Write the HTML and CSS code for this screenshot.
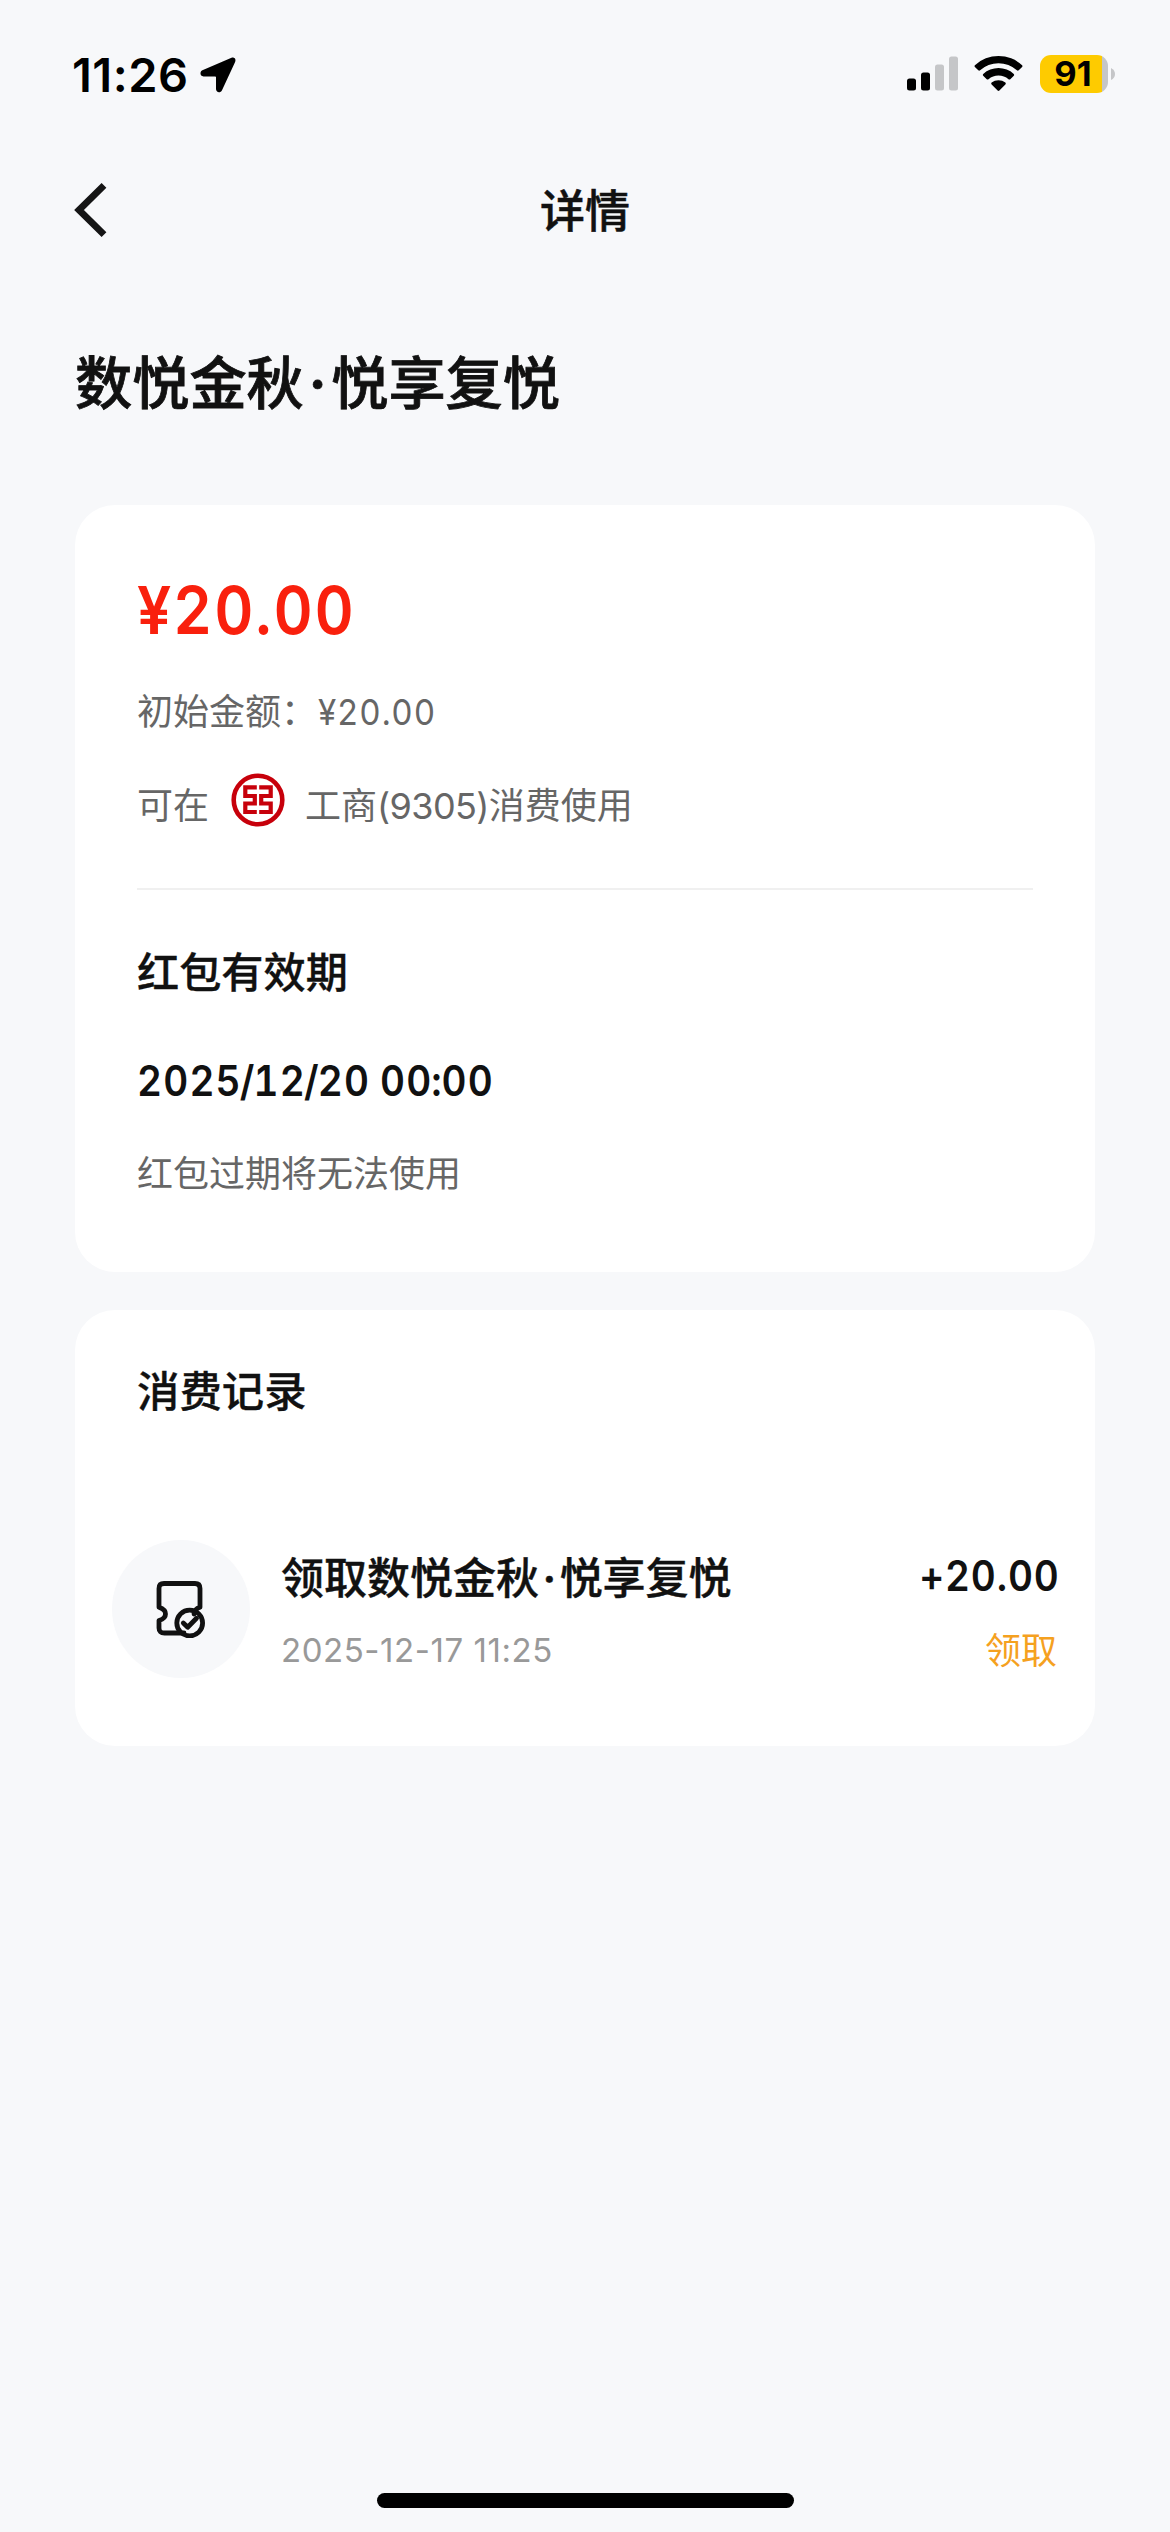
FILE: index.html
```
<!DOCTYPE html>
<html lang="zh-CN">
<head>
<meta charset="utf-8">
<title>详情</title>
<link rel="stylesheet" href="styles.css">
</head>
<body>
<header class="status">
  <div class="status-left">
    <span class="clock">11:26</span>
    <svg width="36" height="36" viewBox="0 0 36 36"><path d="M31.5 0.8 2.4 13.2C-0.6 14.6 0 19.4 3.5 19.4H15.2Q16 19.4 16 20.2V32C16 35.6 20.4 36.4 22 33.2L35 5.2C36.4 2 34.4-.3 31.5.8Z"/></svg>
  </div>
  <div class="status-right">
    <svg class="signal" width="52" height="35" viewBox="0 0 52 35">
      <rect x="0" y="22.5" width="9" height="12" rx="2.5"/>
      <rect x="14" y="16.5" width="9" height="18" rx="2.5"/>
      <rect class="off" x="28" y="8.5" width="9" height="26" rx="2.5"/>
      <rect class="off" x="42" y=".5" width="9" height="34" rx="2.5"/>
    </svg>
    <svg class="wifi" width="49" height="37" viewBox="0 0 49 37">
      <path d="M.9 10.2A34.6 34.6 0 0 1 48.1 10.2Q48.9 11 48.1 11.9L44.7 15.3Q43.8 16.2 42.9 15.3A27.2 27.2 0 0 0 6.1 15.3Q5.2 16.2 4.3 15.3L.9 11.9Q.1 11 .9 10.2Z"/>
      <path d="M9.2 18.9A22.8 22.8 0 0 1 39.8 18.9Q40.7 19.8 39.8 20.7L36.3 24.2Q35.4 25 34.5 24.2A15.3 15.3 0 0 0 14.5 24.2Q13.6 25 12.7 24.2L9.2 20.7Q8.3 19.8 9.2 18.9Z"/>
      <path d="M17.6 27.6A11 11 0 0 1 31.4 27.6Q32.3 28.5 31.4 29.4L25.4 35.5Q24.5 36.4 23.6 35.5L17.6 29.4Q16.7 28.5 17.6 27.6Z"/>
    </svg>
    <div class="battery"><span class="battery-level">91</span></div>
    <svg class="battery-cap" width="4" height="12" viewBox="0 0 4 12"><path d="M0 0Q4 2 4 6T0 12Z"/></svg>
  </div>
</header>

<nav class="navbar">
  <svg class="back" width="34" height="56" viewBox="0 0 34 56"><path d="M31 3.300 6 28 31 52.700"/></svg>
  <span class="nav-title">详情</span>
</nav>

<main>
  <h1 class="heading">数悦金秋<span class="dot">·</span>悦享复悦</h1>

  <section class="card detail">
    <div class="amount"><span class="num">¥20.00</span></div>
    <div class="line initial">初始金额：<span class="num">¥20.00</span></div>
    <div class="line bank">
      <span>可在</span>
      <svg class="bank-logo" width="54" height="54" viewBox="0 0 54 54">
        <circle cx="27" cy="27" r="24.3"/>
        <path d="M25.800 14.300H14.300V23H23.800V30.500H14.300V39H25.800M28.200 14.300H39.700V23H30.200V30.500H39.700V39H28.200"/>
      </svg>
      <span>工商<span class="card-no">(9305)</span>消费使用</span>
    </div>
    <hr class="divider">
    <h2 class="subtitle">红包有效期</h2>
    <div class="expiry"><span class="num">2025<span class="slash">/</span>12<span class="slash">/</span>20 00<span class="colon">:</span>00</span></div>
    <div class="line note">红包过期将无法使用</div>
  </section>

  <section class="card records">
    <h2 class="subtitle">消费记录</h2>
    <div class="record">
      <div class="record-icon">
        <svg width="50" height="58" viewBox="0 0 50 58">
          <path d="M29 53H9.5Q4 53 4 48V40.5Q10.500 38.500 10.500 34T4 27.300V8.500Q4 3.500 9 3.500H40Q45 3.500 45 8.500V27.300Q39.500 29 39 34"/>
          <circle cx="34.700" cy="43" r="12.900"/>
          <path d="M28.300 43 32.700 47.300 41.500 38.300"/>
        </svg>
      </div>
      <div class="record-text">
        <div class="record-title">领取数悦金秋<span class="dot">·</span>悦享复悦</div>
        <div class="record-time">2025-12-17 11:25</div>
      </div>
      <div class="record-side">
        <div class="record-amount"><span class="num">+20.00</span></div>
        <div class="record-type">领取</div>
      </div>
    </div>
  </section>
</main>
<footer class="home"><div class="home-bar"></div></footer>
</body>
</html>
```
FILE: styles.css
```
* { box-sizing: border-box; margin: 0; padding: 0; }
body {
  width: 1170px;
  height: 2532px;
  display: flex;
  flex-direction: column;
  background: #f7f8fa;
  color: #111;
  font-family: Inter, "Noto Sans CJK SC", sans-serif;
  font-weight: 400;
  white-space: nowrap;
}
svg { display: block; flex: none; }

.status {
  height: 150px;
  padding: 0 55px 0 73px;
  display: flex;
  justify-content: space-between;
  color: #000;
}
.status-left { display: flex; padding-top: 57px; gap: 14px; }
.clock { width: 113px; margin-left: -1px; margin-right: 1px; font-size: 47px; line-height: 35px; font-weight: 600; letter-spacing: 0.5px; }
.status-right { display: flex; padding-top: 55px; }
.signal { margin-top: 1px; }
.signal .off { fill: #c5c6c8; }
.wifi { margin-left: 15px; }
.battery {
  width: 68px;
  height: 38px;
  margin-left: 17px;
  border-radius: 11px;
  background: linear-gradient(90deg, #fecb00 62px, #c5c6c8 62px);
  text-align: center;
}
.battery-level { font-size: 34.5px; line-height: 38px; font-weight: 700; padding-right: 2px; }
.battery-cap { margin: 13px 0 0 3px; fill: #c5c6c8; }

.navbar {
  height: 120px;
  padding: 0 73px;
  display: grid;
  grid-template-columns: 34px 1fr 34px;
  align-items: center;
}
.back { fill: none; stroke: #151515; stroke-width: 6.8; }
.nav-title { text-align: center; font-size: 45px; line-height: 60px; font-weight: 500; padding-top: 3px; -webkit-text-stroke: 0.5px; }

main { flex: 1; padding: 0 75px; }
.heading {
  height: 235px;
  padding-top: 74px;
  font-size: 57.2px;
  line-height: 80px;
  font-weight: 500;
  -webkit-text-stroke: 0.8px;
}
.dot {
  display: inline-block;
  width: 0.48em;
  text-align: center;
  font-family: Inter, sans-serif;
  font-weight: 600;
}
.card { background: #fff; border-radius: 40px; padding: 0 62px; }
.num { display: inline-block; transform: scaleX(0.92); transform-origin: 0 50%; font-feature-settings: "tnum", "calt" 0; }

.detail { height: 767px; }
.amount {
  padding-top: 65px;
  font-size: 66px;
  line-height: 80px;
  font-weight: 600;
  color: #f9200d;
}
.amount .num { letter-spacing: 2px; }
.line { font-size: 36px; line-height: 50px; color: #666; }
.initial { margin-top: 37px; }
.initial .num { margin-left: 1px; letter-spacing: 0.9px; }
.bank { margin-top: 31px; height: 72px; display: flex; align-items: center; }
.bank > span { padding-top: 4px; }
.card-no { letter-spacing: -0.6px; }
.bank-logo { margin: -8px 20px 0 22px; }
.bank-logo circle { fill: none; stroke: #c7000b; stroke-width: 4.6; }
.bank-logo path { fill: none; stroke: #c7000b; stroke-width: 4.2; }
.divider { margin-top: 48px; height: 2px; border: 0; background: #f0f0f0; }
.subtitle { font-size: 42.2px; line-height: 60px; font-weight: 500; -webkit-text-stroke: 0.3px; }
.detail .subtitle { margin-top: 53px; }
.expiry { margin-top: 50px; font-size: 42px; line-height: 56px; font-weight: 600; }
.expiry .num { letter-spacing: 1.3px; word-spacing: -2px; }
.slash { margin: 0 -2.2px; }
.colon { margin: 0 -1.3px; }
.note { margin-top: 40px; }

.records { margin-top: 38px; height: 436px; padding: 0 38px 0 37px; }
.records .subtitle { padding: 52px 0 0 25px; font-size: 42.4px; }
.record { margin-top: 118px; display: flex; height: 138px; }
.record-icon {
  flex: none;
  width: 138px;
  height: 138px;
  border-radius: 50%;
  background: #f7f8fa;
  display: flex;
  align-items: center;
  justify-content: center;
}
.record-icon svg { margin-right: 2px; fill: none; stroke: #111; stroke-width: 4.8; stroke-linejoin: round; stroke-linecap: round; }
.record-text { flex: 1; padding: 8px 0 0 31px; }
.record-title { font-size: 43px; line-height: 60px; font-weight: 500; -webkit-text-stroke: 0.4px; }
.record-time { margin-top: 18px; font-size: 33px; line-height: 48px; color: #999; font-feature-settings: "calt" 0; letter-spacing: 0.55px; }
.record-side { width: 150px; padding-top: 6px; text-align: right; }
.record-amount { font-size: 42px; line-height: 60px; font-weight: 600; }
.record-amount .num { transform-origin: 100% 50%; margin-right: 4px; letter-spacing: 0.9px; }
.record-type { margin-top: 20px; font-size: 36px; line-height: 50px; color: #f5a11f; }

.home { height: 39px; display: flex; justify-content: center; }
.home-bar { width: 417px; height: 15px; border-radius: 8px; background: #000; }
```
